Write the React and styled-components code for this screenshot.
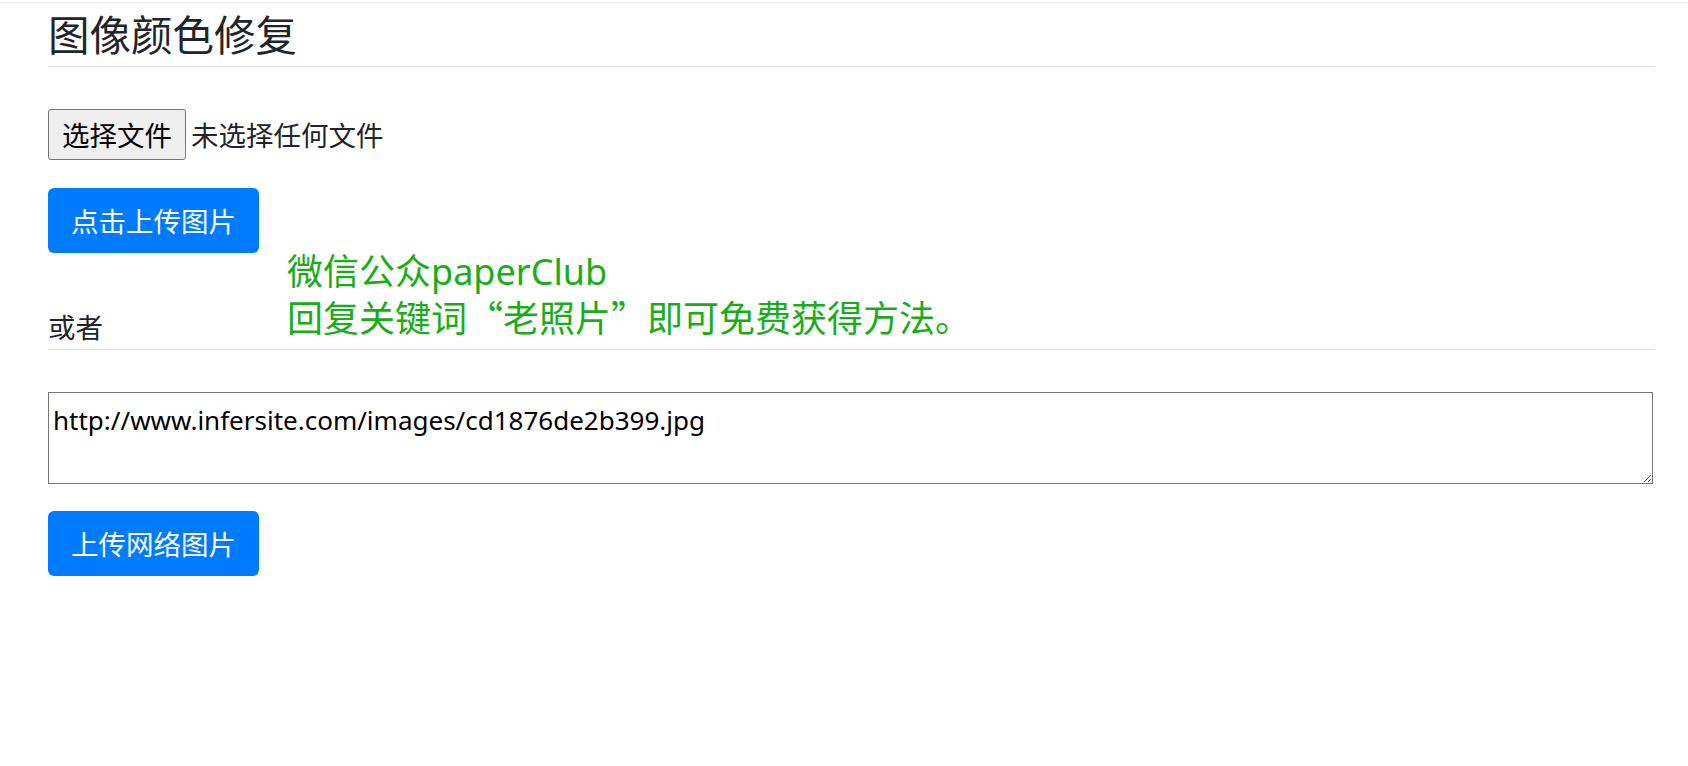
import React from 'react';
import styled, { createGlobalStyle } from 'styled-components';

const Global = createGlobalStyle`
  html, body { margin: 0; padding: 0; background: #fff; }
  body {
    font-family: "Noto Sans", "Noto Sans CJK SC", sans-serif;
    color: #212529;
    font-size: 27.5px;
  }
`;

const TopRule = styled.div`
  margin-top: 2px;
  height: 1px;
  background: #ececec;
`;

const Container = styled.main`
  padding: 0 35px 0 48px;
`;

const Title = styled.h2`
  margin: 8px 0 0;
  padding-bottom: 6px;
  font-size: 41.5px;
  font-weight: 400;
  line-height: 48.6px;
  border-bottom: 1px solid #e2e2e2;
`;

const FileRow = styled.div`
  margin-top: 42px;
  display: flex;
  align-items: center;
  gap: 5px;
`;

const FileButton = styled.button`
  height: 51px;
  padding: 0 13px;
  font: inherit;
  font-size: 27.5px;
  color: #000;
  background: #efefef;
  border: 1px solid #767676;
  border-radius: 3px;
`;

const FileName = styled.span`
  font-size: 27.5px;
  color: #212529;
`;

const PrimaryButton = styled.button`
  display: block;
  margin-top: ${(p) => p.$top}px;
  height: 65px;
  padding: 0 23px;
  font: inherit;
  font-size: 27.5px;
  color: #fff;
  background: #007bff;
  border: none;
  border-radius: 6px;
`;

const OrRow = styled.div`
  margin-top: -5px;
  display: flex;
  align-items: flex-end;
  gap: 184px;
  border-bottom: 1px solid #e2e2e2;
`;

const OrLabel = styled.span`
  font-size: 27.5px;
  line-height: 40.5px;
`;

const Note = styled.div`
  margin-bottom: 7px;
  font-size: 36px;
  line-height: 47px;
  color: #1aad19;
`;

const CjkPunct = styled.span`
  font-family: "Noto Sans CJK SC", sans-serif;
  font-feature-settings: "fwid" 1;
  line-height: 1;
`;

const UrlBox = styled.textarea`
  display: block;
  box-sizing: border-box;
  width: 100%;
  height: 92px;
  margin-top: 42px;
  padding: 9px 4px 4px;
  font: inherit;
  font-size: 26px;
  color: #000;
  border: 1px solid #767676;
  border-radius: 0;
  resize: vertical;
`;

export default function App() {
  return (
    <>
      <Global />
      <TopRule />
      <Container>
        <Title>图像颜色修复</Title>
        <FileRow>
          <FileButton type="button">选择文件</FileButton>
          <FileName>未选择任何文件</FileName>
        </FileRow>
        <PrimaryButton type="button" $top={28}>点击上传图片</PrimaryButton>
        <OrRow>
          <OrLabel>或者</OrLabel>
          <Note>
            微信公众paperClub
            <br />
            回复关键词<CjkPunct>“</CjkPunct>老照片<CjkPunct>”</CjkPunct>即可免费获得方法。
          </Note>
        </OrRow>
        <UrlBox defaultValue="http://www.infersite.com/images/cd1876de2b399.jpg" />
        <PrimaryButton type="button" $top={27}>上传网络图片</PrimaryButton>
      </Container>
    </>
  );
}
